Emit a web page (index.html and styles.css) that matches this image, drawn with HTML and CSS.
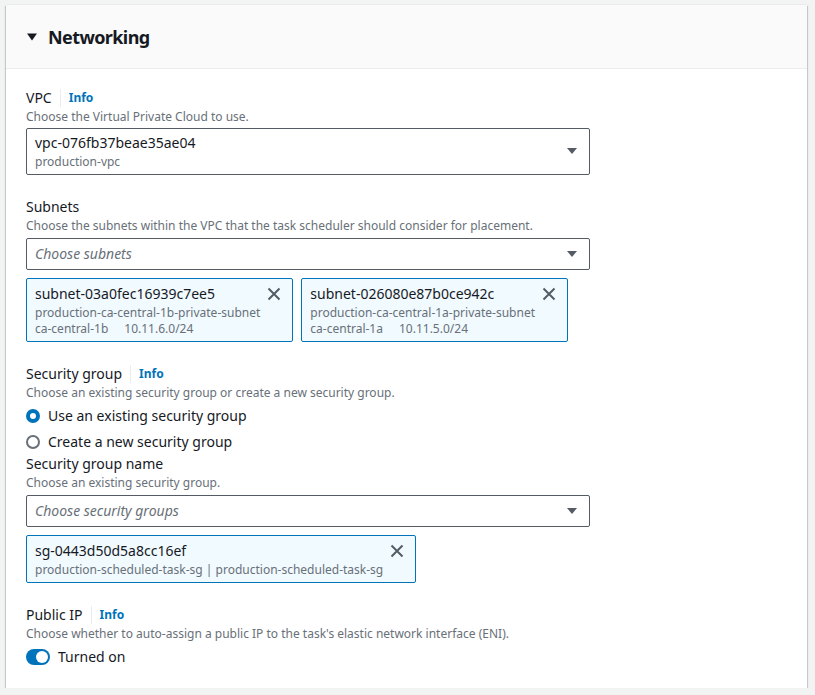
FILE: index.html
```html
<!DOCTYPE html>
<html lang="en">
<head>
<meta charset="utf-8">
<title>Networking</title>
<link rel="stylesheet" href="styles.css">
</head>
<body>
<section class="card">
  <header class="card-header">
    <svg class="expand-caret" width="12" height="10" viewBox="0 0 12 10"><path d="M1 1.5h10L6 8.5z" fill="#16191f"/></svg>
    <h2 class="card-title">Networking</h2>
  </header>
  <div class="card-body">
    <div class="field">
      <div class="field-label"><span>VPC</span><span class="info">Info</span></div>
      <div class="field-desc">Choose the Virtual Private Cloud to use.</div>
      <div class="select select-tall">
        <div class="select-value">
          <div class="value-main">vpc-076fb37beae35ae04</div>
          <div class="value-sub">production-vpc</div>
        </div>
        <svg class="caret" width="12" height="8" viewBox="0 0 12 8"><path d="M1 1h10L6 7z" fill="#545b64"/></svg>
      </div>
    </div>

    <div class="field">
      <div class="field-label"><span>Subnets</span></div>
      <div class="field-desc">Choose the subnets within the VPC that the task scheduler should consider for placement.</div>
      <div class="select">
        <div class="placeholder">Choose subnets</div>
        <svg class="caret" width="12" height="8" viewBox="0 0 12 8"><path d="M1 1h10L6 7z" fill="#545b64"/></svg>
      </div>
      <div class="tokens">
        <div class="token">
          <div class="token-text">
            <div class="value-main">subnet-03a0fec16939c7ee5</div>
            <div class="value-sub">production-ca-central-1b-private-subnet</div>
            <div class="value-sub"><span class="tag">ca-central-1b</span>10.11.6.0/24</div>
          </div>
          <svg class="dismiss" width="16" height="16" viewBox="0 0 16 16"><path d="M2.5 2.5l11 11M13.5 2.5l-11 11" stroke="#545b64" stroke-width="2" fill="none"/></svg>
        </div>
        <div class="token">
          <div class="token-text">
            <div class="value-main">subnet-026080e87b0ce942c</div>
            <div class="value-sub">production-ca-central-1a-private-subnet</div>
            <div class="value-sub"><span class="tag">ca-central-1a</span>10.11.5.0/24</div>
          </div>
          <svg class="dismiss" width="16" height="16" viewBox="0 0 16 16"><path d="M2.5 2.5l11 11M13.5 2.5l-11 11" stroke="#545b64" stroke-width="2" fill="none"/></svg>
        </div>
      </div>
    </div>

    <div class="field">
      <div class="field-label"><span>Security group</span><span class="info">Info</span></div>
      <div class="field-desc">Choose an existing security group or create a new security group.</div>
      <div class="radios">
        <label class="radio"><span class="radio-dot checked"></span>Use an existing security group</label>
        <label class="radio"><span class="radio-dot"></span>Create a new security group</label>
      </div>
      <div class="field-label"><span>Security group name</span></div>
      <div class="field-desc">Choose an existing security group.</div>
      <div class="select">
        <div class="placeholder">Choose security groups</div>
        <svg class="caret" width="12" height="8" viewBox="0 0 12 8"><path d="M1 1h10L6 7z" fill="#545b64"/></svg>
      </div>
      <div class="tokens">
        <div class="token">
          <div class="token-text">
            <div class="value-main">sg-0443d50d5a8cc16ef</div>
            <div class="value-sub">production-scheduled-task-sg | production-scheduled-task-sg</div>
          </div>
          <svg class="dismiss" width="16" height="16" viewBox="0 0 16 16"><path d="M2.5 2.5l11 11M13.5 2.5l-11 11" stroke="#545b64" stroke-width="2" fill="none"/></svg>
        </div>
      </div>
    </div>

    <div class="field">
      <div class="field-label"><span>Public IP</span><span class="info">Info</span></div>
      <div class="field-desc">Choose whether to auto-assign a public IP to the task's elastic network interface (ENI).</div>
      <div class="toggle-row">
        <span class="toggle"><span class="knob"></span></span>Turned on
      </div>
    </div>
  </div>
</section>
</body>
</html>
```

FILE: styles.css
```css
html, body {
  margin: 0;
  padding: 0;
}
body {
  background: #f2f3f3;
  font-family: "Noto Sans", "Open Sans", sans-serif;
  color: #16191f;
  font-size: 14px;
  line-height: 22px;
  padding: 5px 8px 0 6px;
}
.card {
  width: 801px;
  background: #fff;
  box-shadow: 0 1px 1px 0 rgba(0, 28, 36, 0.3), 1px 1px 1px 0 rgba(0, 28, 36, 0.15), -1px 1px 1px 0 rgba(0, 28, 36, 0.15), 0 -1px 0 0 #eaeded;
}
.card-header {
  box-sizing: border-box;
  height: 64px;
  background: #fafafa;
  border-bottom: 1px solid #eaeded;
  display: flex;
  align-items: center;
  padding: 0 20px;
  gap: 10px;
}
.expand-caret {
  display: block;
  margin-top: 1px;
}
.card-title {
  margin: 0;
  font-size: 18px;
  font-weight: 700;
  line-height: 22px;
  letter-spacing: -0.6px;
}
.card-body {
  padding: 18px 20px 20px;
  display: flex;
  flex-direction: column;
  gap: 21px;
}
.field-label {
  display: flex;
  align-items: center;
  height: 22px;
}
.info {
  color: #0073bb;
  font-weight: 700;
  font-size: 12px;
  margin-left: 8px;
  padding-left: 8px;
  border-left: 1px solid #eaeded;
  line-height: 18px;
}
.field-desc {
  font-size: 12px;
  line-height: 16px;
  color: #687078;
}
.select {
  margin-top: 4px;
  width: 564px;
  box-sizing: border-box;
  border: 1px solid #545b64;
  border-radius: 2px;
  display: flex;
  align-items: center;
  padding: 4px 11px 4px 8px;
  min-height: 32px;
}
.select-tall {
  margin-top: 3px;
  padding-top: 3px;
  padding-bottom: 4px;
}
.select-value, .placeholder {
  flex: 1;
}
.placeholder {
  font-style: italic;
  color: #687078;
}
.value-main {
  line-height: 22px;
}
.value-sub {
  font-size: 12px;
  line-height: 16px;
  color: #687078;
}
.tag {
  margin-right: 16px;
}
.caret {
  display: block;
}
.tokens {
  display: flex;
  gap: 8px;
  margin-top: 8px;
}
.token {
  display: flex;
  align-items: flex-start;
  gap: 6px;
  background: #f1faff;
  border: 1px solid #0073bb;
  border-radius: 2px;
  padding: 4px 10px 4px 8px;
}
.dismiss {
  display: block;
  margin-top: 3px;
}
.radios {
  display: flex;
  flex-direction: column;
  gap: 4px;
  margin-top: 4px;
}
.radio {
  display: flex;
  align-items: center;
  gap: 8px;
  line-height: 22px;
}
.radio-dot {
  width: 14px;
  height: 14px;
  box-sizing: border-box;
  border-radius: 50%;
  border: 2px solid #687078;
  background: #fff;
}
.radio-dot.checked {
  border: 4px solid #0073bb;
}
.toggle-row {
  margin-top: 4px;
  display: flex;
  align-items: center;
  gap: 8px;
}
.toggle {
  width: 24px;
  height: 16px;
  border-radius: 8px;
  background: #0073bb;
  position: relative;
  display: block;
}
.knob {
  position: absolute;
  top: 2px;
  right: 2px;
  width: 12px;
  height: 12px;
  border-radius: 50%;
  background: #fff;
}
```
